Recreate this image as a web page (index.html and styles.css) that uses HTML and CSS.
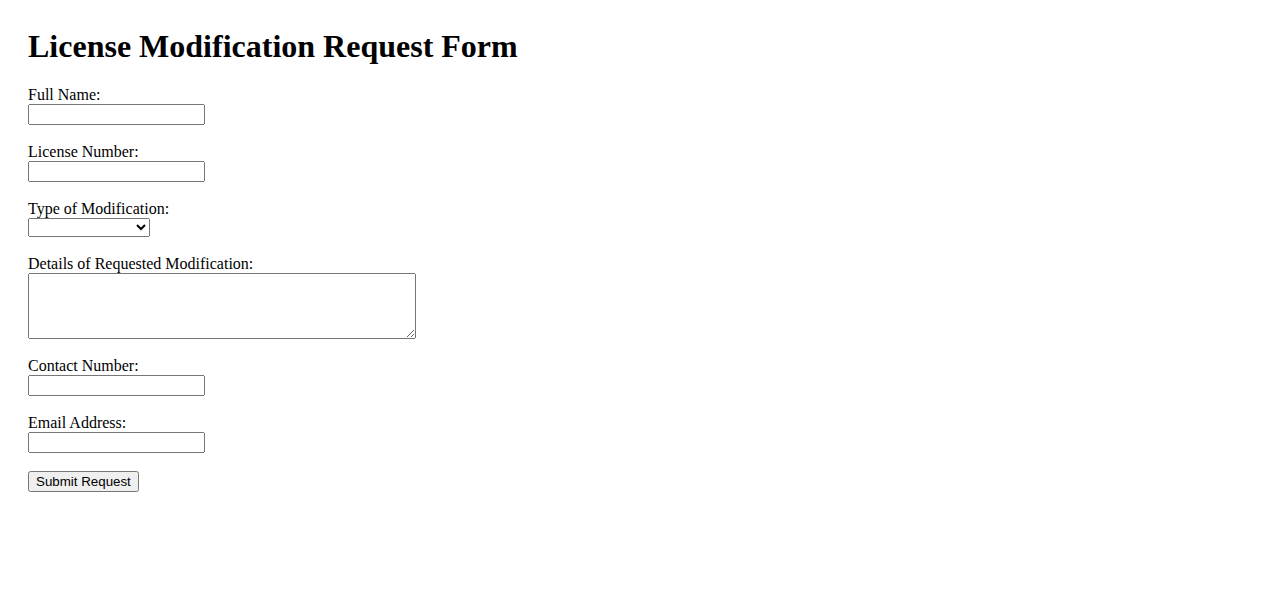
FILE: index.html
```html
<!DOCTYPE html>
<html lang="en">
<head>
<meta charset="utf-8">
<title>License Modification Request Form</title>
<link rel="stylesheet" href="styles.css">
</head>
<body>
<h1 class="title">License Modification Request Form</h1>
<form class="form">
  <div class="field">
    <label class="label" for="fullName">Full Name:</label>
    <input class="text-input" type="text" id="fullName" name="fullName">
  </div>
  <div class="field">
    <label class="label" for="licenseNumber">License Number:</label>
    <input class="text-input" type="text" id="licenseNumber" name="licenseNumber">
  </div>
  <div class="field">
    <label class="label" for="modType">Type of Modification:</label>
    <select class="select" id="modType" name="modType">
      <option value="" selected></option>
      <option value="name">Name Change</option>
      <option value="address">Address Change</option>
      <option value="class">Class Upgrade</option>
    </select>
  </div>
  <div class="field">
    <label class="label" for="details">Details of Requested Modification:</label>
    <textarea class="textarea" id="details" name="details"></textarea>
  </div>
  <div class="field">
    <label class="label" for="contact">Contact Number:</label>
    <input class="text-input" type="tel" id="contact" name="contact">
  </div>
  <div class="field">
    <label class="label" for="email">Email Address:</label>
    <input class="text-input" type="email" id="email" name="email">
  </div>
  <div class="actions">
    <button class="submit" type="submit">Submit Request</button>
  </div>
</form>
</body>
</html>
```
FILE: styles.css
```css
html, body {
  background: #ffffff;
}

body {
  margin: 0;
  padding: 28px;
  font-family: "Liberation Serif", "Times New Roman", serif;
  font-size: 16px;
  color: #000000;
}

.title {
  margin: 0 0 21px 0;
  font-size: 32px;
  font-weight: bold;
  line-height: 36.8px;
}

.form {
  display: flex;
  flex-direction: column;
  align-items: flex-start;
  gap: 17.6px;
}

.field {
  display: flex;
  flex-direction: column;
  align-items: flex-start;
}

.label {
  display: block;
  line-height: 18.4px;
}

.text-input {
  box-sizing: border-box;
  width: 177px;
  height: 21px;
  margin: 0;
  font-family: "Liberation Sans", Arial, sans-serif;
  font-size: 13.333px;
}

.select {
  box-sizing: border-box;
  width: 122px;
  height: 19px;
  margin: 0;
  font-family: "Liberation Sans", Arial, sans-serif;
  font-size: 13.333px;
}

.textarea {
  box-sizing: border-box;
  width: 388px;
  height: 66px;
  margin: 0;
  font-family: "Liberation Mono", "Courier New", monospace;
  font-size: 13.333px;
}

.actions {
  display: flex;
}

.submit {
  box-sizing: border-box;
  height: 21px;
  margin: 0;
  padding: 1px 6px;
  font-family: "Liberation Sans", Arial, sans-serif;
  font-size: 13.333px;
}
```
